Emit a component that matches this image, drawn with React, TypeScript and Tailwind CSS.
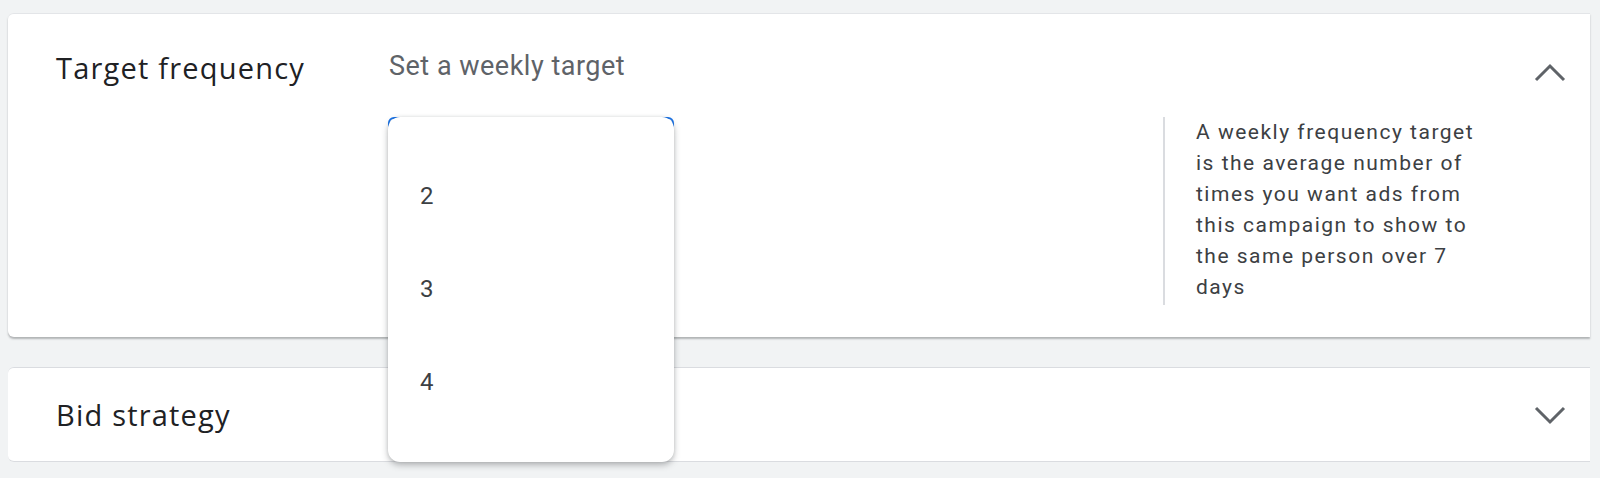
import React from "react";

const sans = { fontFamily: "Roboto, 'Liberation Sans', sans-serif" };
const title = { fontFamily: "'Open Sans', Roboto, sans-serif" };

function Chevron({ up }: { up?: boolean }) {
  return (
    <svg width="32" height="20" viewBox="0 0 32 20" aria-hidden="true">
      <polyline
        points={up ? "2,17 16,3 30,17" : "2,3 16,17 30,3"}
        fill="none"
        stroke="#5f6368"
        strokeWidth="3"
      />
    </svg>
  );
}

export default function App() {
  const options = ["2", "3", "4"];

  return (
    <div className="relative h-[478px] w-[1600px] overflow-hidden bg-[#f1f3f4] pt-[13px] pl-[8px] pr-[10px]" style={sans}>
      <div className="flex h-[324px] rounded-l-md border-t border-[#e3e5e8] bg-white shadow-[0_2px_2px_rgba(60,64,67,0.35)]">
        <div className="w-[381px] shrink-0 pl-[48px] pt-[35px] text-[29px] leading-[38px] tracking-[1.2px] text-[#202124]" style={title}>
          Target frequency
        </div>
        <div className="w-[774px] shrink-0 pt-[34px]">
          <div className="text-[27px] leading-[36px] tracking-[0.5px] text-[#5f6368]">Set a weekly target</div>
          <div className="-ml-px mt-[33px] h-[56px] w-[286px] rounded-md border-2 border-[#1a73e8]" />
        </div>
        <div className="mt-[103px] h-[188px] w-[2px] bg-[#dadce0]" />
        <div className="w-[322px] shrink-0 pl-[31px] pt-[103px] text-[21px] leading-[31px] tracking-[1.5px] text-[#3c4043]">
          A weekly frequency target is the average number of times you want ads from this campaign to show to the same person over 7 days
        </div>
        <div className="flex flex-1 justify-end pr-[24px] pt-[49px]">
          <Chevron up />
        </div>
      </div>

      <div className="mt-[30px] flex h-[95px] items-center justify-between rounded-l-md border-t border-b border-[#dadce0] bg-white pl-[48px] pr-[24px]">
        <div className="text-[29px] tracking-[1.2px] text-[#202124]" style={title}>
          Bid strategy
        </div>
        <Chevron />
      </div>

      <div className="absolute left-[388px] top-[117px] flex h-[345px] w-[286px] flex-col rounded-xl bg-white pt-[32px] shadow-[0_3px_6px_rgba(60,64,67,0.35),0_0_3px_rgba(60,64,67,0.12)]">
        {options.map((o) => (
          <div key={o} className="flex h-[93px] items-center pl-[32px] text-[24px] text-[#3c4043]">
            {o}
          </div>
        ))}
      </div>
    </div>
  );
}
